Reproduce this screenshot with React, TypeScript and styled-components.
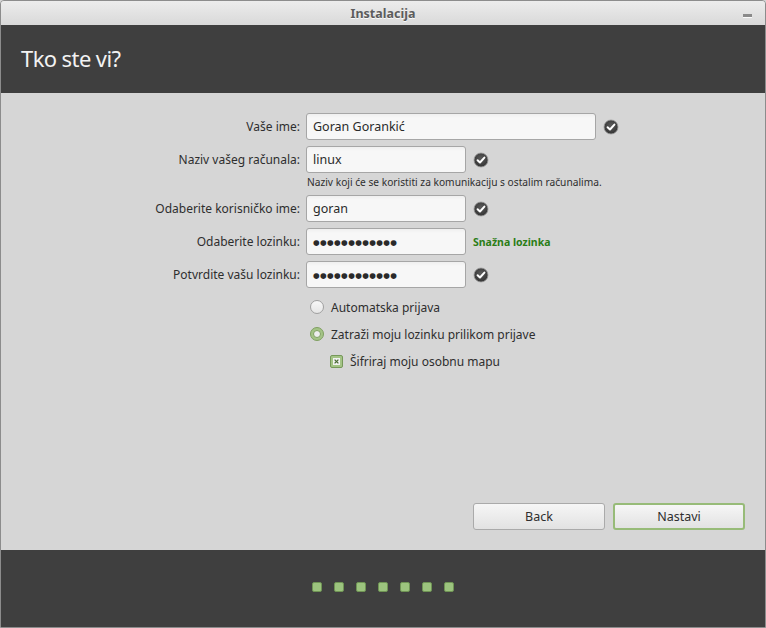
import React from "react";
import styled, { createGlobalStyle } from "styled-components";

const Global = createGlobalStyle`
  html, body { margin: 0; padding: 0; background: #d6d6d6; }
  body { font-family: "Noto Sans", "DejaVu Sans", sans-serif; }
  * { box-sizing: border-box; }
`;

const Window = styled.div`
  width: 766px;
  height: 628px;
  border: 1px solid #8c8c8c;
  border-radius: 4px 4px 0 0;
  display: flex;
  flex-direction: column;
  overflow: hidden;
  background: #d6d6d6;
`;

const TitleBar = styled.div`
  height: 24px;
  flex: none;
  display: grid;
  grid-template-columns: 1fr auto 1fr;
  align-items: center;
  background: linear-gradient(#ececec, #d9d9d9);
  padding: 0 12px;
`;

const Title = styled.div`
  font-weight: bold;
  font-size: 12.5px;
  color: #5c5c5c;
  text-shadow: 0 1px 0 #fafafa;
`;

const Minimize = styled.div`
  justify-self: end;
  width: 9px;
  height: 3px;
  margin-top: 5px;
  margin-right: 1px;
  background: #8a8a8a;
  box-shadow: 0 1px 0 #fafafa;
`;

const Header = styled.div`
  height: 68px;
  flex: none;
  background: #3f3f3f;
  display: flex;
  align-items: center;
  padding-left: 20px;
  padding-bottom: 2px;
`;

const Heading = styled.h1`
  margin: 0;
  font-weight: normal;
  font-size: 22px;
  color: #f2f2f2;
  letter-spacing: -0.6px;
`;

const Content = styled.div`
  flex: 1;
  display: flex;
  flex-direction: column;
  padding: 20px 20px 20px 0;
`;

const Form = styled.div`
  display: flex;
  flex-direction: column;
  gap: 6px;
`;

const Row = styled.div`
  display: flex;
  align-items: center;
  gap: 6px;
`;

const Label = styled.div`
  width: 299px;
  text-align: right;
  font-size: 12px;
  color: #2e2e2e;
`;

const Field = styled.div<{ $w: number }>`
  width: ${(p) => p.$w}px;
  height: 27px;
  border: 1px solid #a6a6a6;
  border-radius: 3px;
  background: linear-gradient(#efefef, #f7f7f7 4px, #f7f7f7);
  display: flex;
  align-items: center;
  padding: 0 6px;
  font-size: 12.5px;
  color: #2a2a2a;
`;

const Dots = styled.span`
  font-size: 7.6px;
  letter-spacing: 0.4px;
  color: #2a2a2a;
`;

const Status = styled.div`
  margin-left: 1px;
  display: flex;
  align-items: center;
`;

const Strong = styled.span`
  font-size: 10.5px;
  font-weight: bold;
  color: #2b7d16;
`;

const Hint = styled.div`
  margin-left: 306px;
  margin-top: 2px;
  font-size: 10.2px;
  color: #2e2e2e;
  height: 14px;
  line-height: 14px;
`;

const Options = styled.div`
  display: flex;
  flex-direction: column;
  gap: 11px;
  margin-top: 11px;
  padding-left: 309px;
`;

const Option = styled.div<{ $indent?: boolean }>`
  display: flex;
  align-items: center;
  gap: 7px;
  font-size: 12px;
  color: #2e2e2e;
  padding-left: ${(p) => (p.$indent ? "20px" : "0")};
  height: 16px;
`;

const Radio = styled.span<{ $on?: boolean }>`
  width: 14px;
  height: 14px;
  border-radius: 50%;
  border: 1px solid ${(p) => (p.$on ? "#7f9f61" : "#a0a0a0")};
  background: ${(p) => (p.$on ? "#a4c486" : "linear-gradient(#f8f8f8, #e6e6e6)")};
  display: flex;
  align-items: center;
  justify-content: center;
  &::after {
    content: "";
    display: ${(p) => (p.$on ? "block" : "none")};
    width: 8px;
    height: 8px;
    border-radius: 50%;
    background: #eeeeee;
    border: 1px solid #7f9f61;
    box-sizing: border-box;
  }
`;

const Check = styled.span`
  width: 13px;
  height: 13px;
  border-radius: 2px;
  border: 1px solid #76985a;
  background: #a4c486;
  display: flex;
  align-items: center;
  justify-content: center;
`;

const Spacer = styled.div`
  flex: 1;
`;

const Buttons = styled.div`
  display: flex;
  justify-content: flex-end;
  gap: 8px;
`;

const Button = styled.button<{ $default?: boolean }>`
  width: 132px;
  height: 27px;
  border-radius: 3px;
  border: ${(p) => (p.$default ? "2px solid #97bb78" : "1px solid #aaaaaa")};
  background: linear-gradient(#f6f6f6, #e2e2e2);
  font-family: inherit;
  font-size: 12.5px;
  color: #2e2e2e;
  padding: 0;
`;

const Footer = styled.div`
  height: 77px;
  flex: none;
  background: #3f3f3f;
  display: flex;
  align-items: center;
  justify-content: center;
  gap: 12px;
  padding-bottom: 3px;
`;

const Step = styled.span`
  width: 10px;
  height: 10px;
  border-radius: 2px;
  background: #9cc47e;
  border: 1px solid #6f9454;
`;

const OkIcon = () => (
  <svg width="16" height="16" viewBox="0 0 16 16">
    <defs>
      <radialGradient id="okg" cx="50%" cy="40%" r="60%">
        <stop offset="0%" stopColor="#5c5c5c" />
        <stop offset="100%" stopColor="#333333" />
      </radialGradient>
    </defs>
    <circle cx="8" cy="8" r="7" fill="url(#okg)" stroke="#9a9a9a" strokeWidth="0.8" />
    <path d="M4.6 8.2 L7 10.5 L11.4 5.6" fill="none" stroke="#ffffff" strokeWidth="2" strokeLinecap="round" strokeLinejoin="round" />
  </svg>
);

const CrossMark = () => (
  <svg width="7" height="7" viewBox="0 0 7 7">
    <rect x="0" y="0" width="7" height="7" fill="#f2f2f2" />
    <path d="M1.6 1.6 L5.4 5.4 M5.4 1.6 L1.6 5.4" stroke="#4b6b35" strokeWidth="1.3" />
  </svg>
);

const pw = "●●●●●●●●●●●●";

export default function App() {
  return (
    <>
      <Global />
      <Window>
        <TitleBar>
          <span />
          <Title>Instalacija</Title>
          <Minimize />
        </TitleBar>
        <Header>
          <Heading>Tko ste vi?</Heading>
        </Header>
        <Content>
          <Form>
            <Row>
              <Label>Vaše ime:</Label>
              <Field $w={290}>Goran Gorankić</Field>
              <Status><OkIcon /></Status>
            </Row>
            <div>
              <Row>
                <Label>Naziv vašeg računala:</Label>
                <Field $w={160}>linux</Field>
                <Status><OkIcon /></Status>
              </Row>
              <Hint>Naziv koji će se koristiti za komunikaciju s ostalim računalima.</Hint>
            </div>
            <Row>
              <Label>Odaberite korisničko ime:</Label>
              <Field $w={160}>goran</Field>
              <Status><OkIcon /></Status>
            </Row>
            <Row>
              <Label>Odaberite lozinku:</Label>
              <Field $w={160}><Dots>{pw}</Dots></Field>
              <Status><Strong>Snažna lozinka</Strong></Status>
            </Row>
            <Row>
              <Label>Potvrdite vašu lozinku:</Label>
              <Field $w={160}><Dots>{pw}</Dots></Field>
              <Status><OkIcon /></Status>
            </Row>
          </Form>
          <Options>
            <Option><Radio />Automatska prijava</Option>
            <Option><Radio $on />Zatraži moju lozinku prilikom prijave</Option>
            <Option $indent><Check><CrossMark /></Check>Šifriraj moju osobnu mapu</Option>
          </Options>
          <Spacer />
          <Buttons>
            <Button>Back</Button>
            <Button $default>Nastavi</Button>
          </Buttons>
        </Content>
        <Footer>
          {Array.from({ length: 7 }).map((_, i) => (
            <Step key={i} />
          ))}
        </Footer>
      </Window>
    </>
  );
}
